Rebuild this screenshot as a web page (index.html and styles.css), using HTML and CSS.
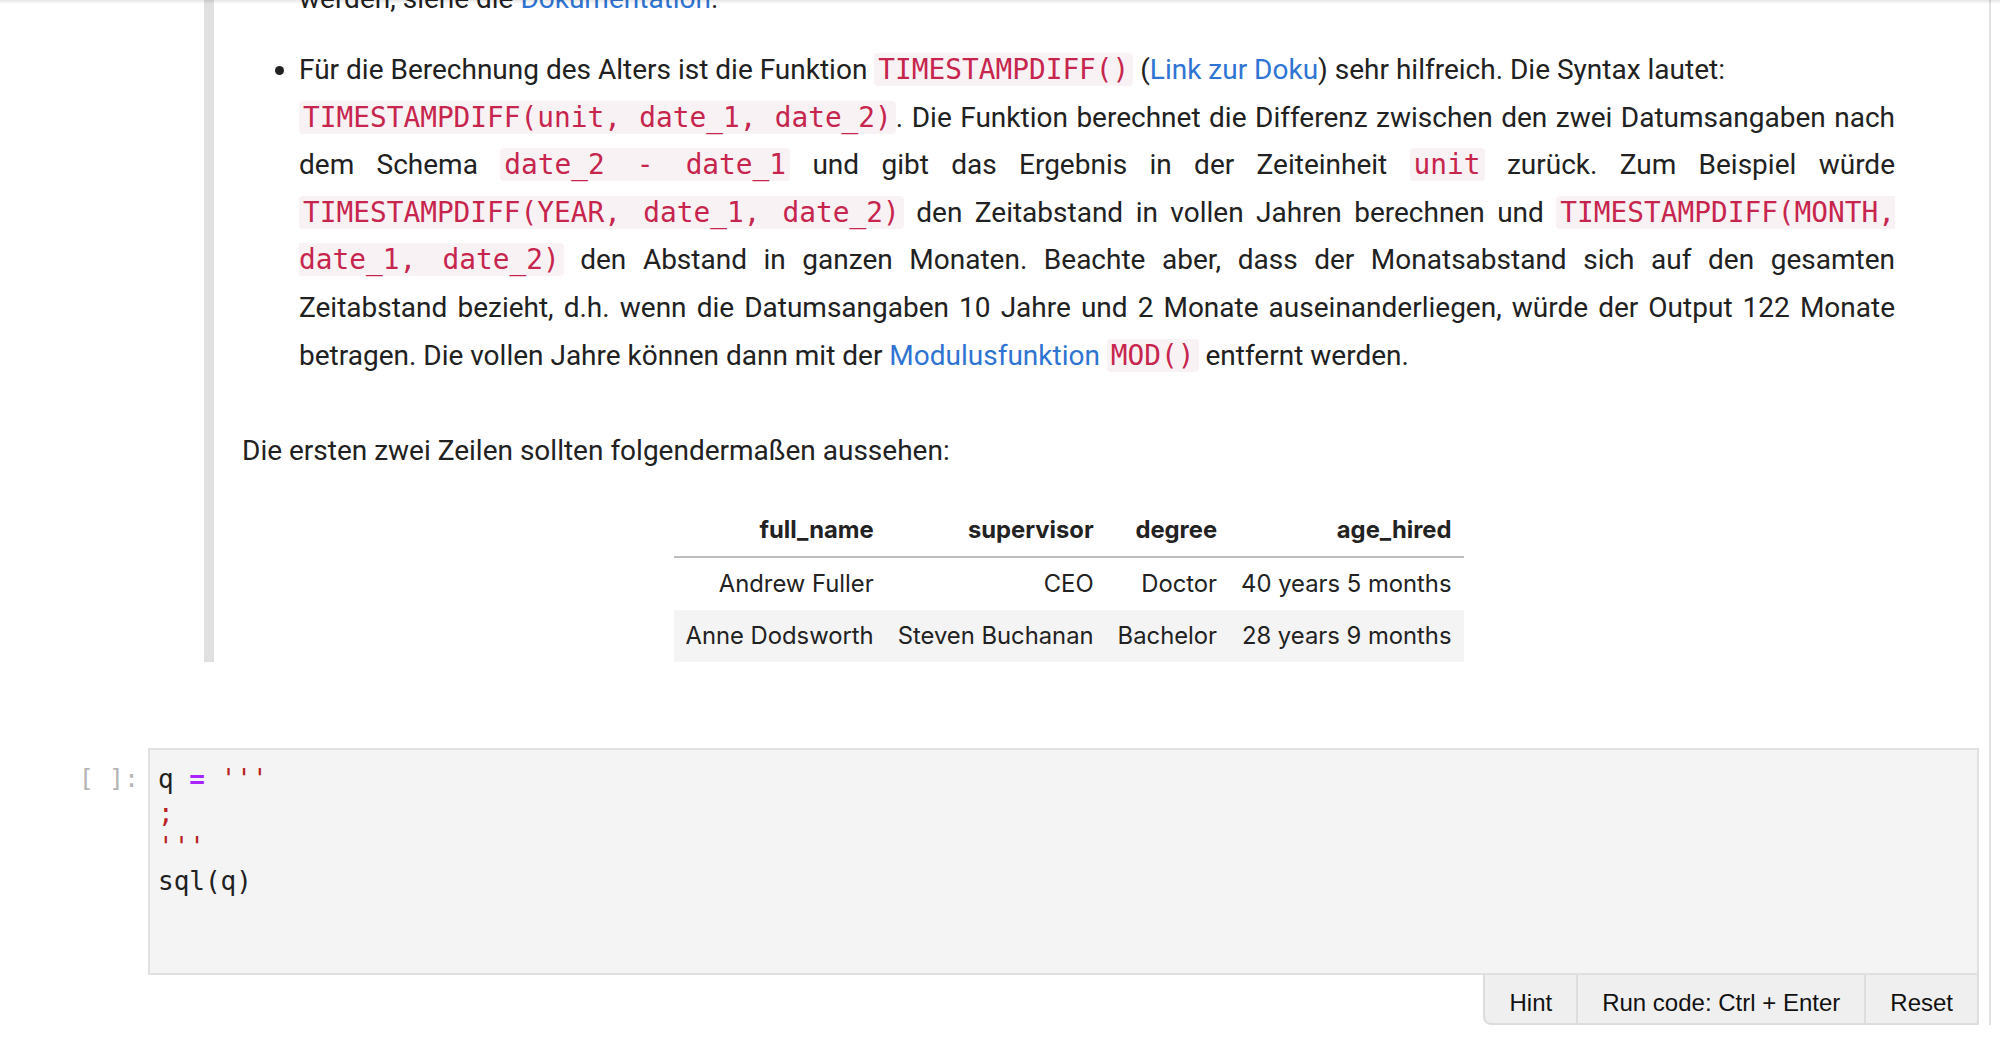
FILE: index.html
```html
<!DOCTYPE html>
<html lang="de">
<head>
<meta charset="utf-8">
<title>Notebook</title>
<link rel="stylesheet" href="styles.css">
</head>
<body>
<div class="topshade"></div>
<main class="page">
  <section class="md-cell">
    <ul class="md-list">
      <li class="li-prev">werden, siehe die <a href="#">Dokumentation</a>.</li>
      <li>Für die Berechnung des Alters ist die Funktion <code>TIMESTAMPDIFF()</code> (<a href="#">Link zur Doku</a>) sehr hilfreich. Die Syntax lautet:<br><code>TIMESTAMPDIFF(unit, date_1, date_2)</code>. Die Funktion berechnet die Differenz zwischen den zwei Datumsangaben nach dem Schema <code>date_2 - date_1</code> und gibt das Ergebnis in der Zeiteinheit <code>unit</code> zurück. Zum Beispiel würde <code>TIMESTAMPDIFF(YEAR, date_1, date_2)</code> den Zeitabstand in vollen Jahren berechnen und <code>TIMESTAMPDIFF(MONTH, date_1, date_2)</code> den Abstand in ganzen Monaten. Beachte aber, dass der Monatsabstand sich auf den gesamten Zeitabstand bezieht, d.h. wenn die Datumsangaben 10 Jahre und 2 Monate auseinanderliegen, würde der Output 122 Monate betragen. Die vollen Jahre können dann mit der <a href="#">Modulusfunktion</a> <code>MOD()</code> entfernt werden.</li>
    </ul>
    <p class="md-p">Die ersten zwei Zeilen sollten folgendermaßen aussehen:</p>
    <table class="df">
      <thead>
        <tr><th>full_name</th><th>supervisor</th><th>degree</th><th>age_hired</th></tr>
      </thead>
      <tbody>
        <tr><td>Andrew Fuller</td><td>CEO</td><td>Doctor</td><td>40 years 5 months</td></tr>
        <tr class="alt"><td>Anne Dodsworth</td><td>Steven Buchanan</td><td>Bachelor</td><td>28 years 9 months</td></tr>
      </tbody>
    </table>
  </section>

  <section class="code-cell">
    <div class="prompt">[ ]:</div>
    <div class="input-col">
      <div class="editor"><div class="cm-line">q <span class="op">=</span> <span class="str">'''</span></div><div class="cm-line"><span class="str">;</span></div><div class="cm-line"><span class="str">'''</span></div><div class="cm-line">sql(q)</div></div>
      <div class="btns">
        <button class="btn">Hint</button>
        <button class="btn">Run code: Ctrl + Enter</button>
        <button class="btn">Reset</button>
      </div>
    </div>
  </section>
</main>
</body>
</html>
```

FILE: styles.css
```css
html, body {
  margin: 0;
  padding: 0;
  background: #ffffff;
}

body {
  font-family: Roboto, "Noto Sans", sans-serif;
  color: #212121;
  overflow: hidden;
}

.topshade {
  position: fixed;
  top: 0;
  left: 0;
  right: 0;
  height: 4px;
  background: linear-gradient(rgba(0, 0, 0, 0.10), rgba(0, 0, 0, 0));
  pointer-events: none;
}

.page {
  width: 1991px;
  min-height: 1042px;
  box-sizing: border-box;
  border-right: 2px solid #e2e2e2;
}

/* ---------- markdown cell ---------- */
.md-cell {
  margin: -25px 94px 0 204px;
  border-left: 10px solid #e0e0e0;
  padding-left: 28px;
  font-size: 28px;
  line-height: 47.6px;
}

.md-list {
  margin: 0 0 47.4px;
  padding-left: 57px;
  text-align: justify;
}

.li-prev {
  list-style: none;
  margin-bottom: 23.4px;
}

.md-cell a {
  color: #2f74d2;
  text-decoration: none;
}

.md-cell code {
  font-family: "DejaVu Sans Mono", monospace;
  font-size: 27.8px;
  color: #c7254e;
  background: #f9f2f4;
  padding: 0 4px;
  border-radius: 4px;
}

.md-p {
  margin: 0 0 30.2px;
}

/* ---------- dataframe ---------- */
.df {
  margin: 0 auto;
  border-collapse: collapse;
  font-family: Inter, "Liberation Sans", sans-serif;
  font-size: 23.8px;
  line-height: 28px;
  color: #222222;
}

.df th,
.df td {
  padding: 12px;
  text-align: right;
  white-space: nowrap;
}

.df thead th {
  font-weight: 700;
  border-bottom: 2px solid #bdbdbd;
}

.df tr.alt {
  background: #f4f4f4;
}

/* ---------- code cell ---------- */
.code-cell {
  display: flex;
  margin-top: 86px;
  padding-right: 10px;
}

.prompt {
  width: 148px;
  flex: none;
  box-sizing: border-box;
  padding: 14px 9px 0 0;
  text-align: right;
  font-family: "DejaVu Sans Mono", monospace;
  font-size: 25px;
  line-height: 34px;
  color: #b5b5b5;
  white-space: pre;
}

.input-col {
  flex: 1;
  display: flex;
  flex-direction: column;
}

.editor {
  height: 227px;
  box-sizing: border-box;
  border: 2px solid #e0e0e0;
  background: #f4f4f4;
  padding: 12px 8px;
  font-family: "DejaVu Sans Mono", monospace;
  font-size: 26px;
  line-height: 34px;
  color: #212121;
  white-space: pre;
}

.op {
  color: #aa22ff;
  font-weight: 700;
}

.str {
  color: #ba2121;
}

.btns {
  align-self: flex-end;
  display: flex;
  height: 50px;
  box-sizing: border-box;
  background: #efefef;
  border: 2px solid #dddddd;
  border-top: none;
  border-bottom-left-radius: 8px;
}

.btn {
  font-family: "Liberation Sans", Arial, sans-serif;
  font-size: 24px;
  color: #111111;
  background: transparent;
  border: none;
  border-left: 2px solid #dddddd;
  padding: 7px 24px 0;
  margin: 0;
}

.btn:first-child {
  border-left: none;
}
```
